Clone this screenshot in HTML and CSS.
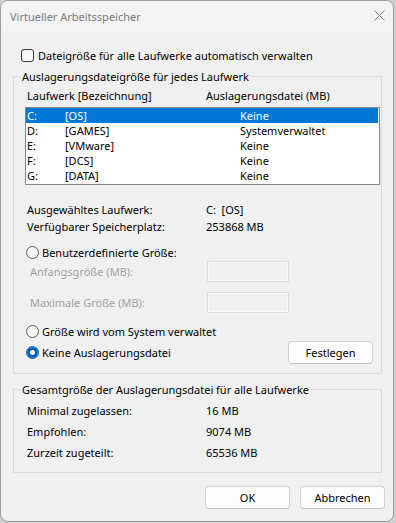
FILE: index.html
```html
<!DOCTYPE html>
<html lang="de">
<head>
<meta charset="utf-8">
<title>Virtueller Arbeitsspeicher</title>
<link rel="stylesheet" href="styles.css">
</head>
<body>
<div class="window">
  <div class="titlebar">
    <span class="title">Virtueller Arbeitsspeicher</span>
    <svg class="close" width="11" height="11" viewBox="0 0 11 11"><path d="M0.5 0.5 L10.5 10.5 M10.5 0.5 L0.5 10.5" stroke="#8a8a8a" stroke-width="1" fill="none"/></svg>
  </div>
  <div class="content">
    <div class="check-row">
      <span class="checkbox"></span>
      <span>Dateigröße für alle Laufwerke automatisch verwalten</span>
    </div>

    <div class="group group-drives">
      <span class="legend">Auslagerungsdateigröße für jedes Laufwerk</span>
      <div class="header-row">
        <span>Laufwerk [Bezeichnung]</span>
        <span>Auslagerungsdatei (MB)</span>
      </div>
      <div class="listbox">
        <div class="lrow selected"><span>C:</span><span>[OS]</span><span>Keine</span></div>
        <div class="lrow"><span>D:</span><span>[GAMES]</span><span>Systemverwaltet</span></div>
        <div class="lrow"><span>E:</span><span>[VMware]</span><span>Keine</span></div>
        <div class="lrow"><span>F:</span><span>[DCS]</span><span>Keine</span></div>
        <div class="lrow"><span>G:</span><span>[DATA]</span><span>Keine</span></div>
      </div>
      <div class="info">
        <span>Ausgewähltes Laufwerk:</span><span class="pre">C:  [OS]</span>
        <span>Verfügbarer Speicherplatz:</span><span>253868 MB</span>
      </div>
      <div class="radio-row first">
        <span class="radio"></span><span>Benutzerdefinierte Größe:</span>
      </div>
      <div class="size-row">
        <span class="disabled">Anfangsgröße (MB):</span><span class="field"></span>
      </div>
      <div class="size-row second">
        <span class="disabled">Maximale Größe (MB):</span><span class="field"></span>
      </div>
      <div class="radio-row system">
        <span class="radio"></span><span>Größe wird vom System verwaltet</span>
      </div>
      <div class="set-row">
        <div class="radio-inline"><span class="radio on"></span><span>Keine Auslagerungsdatei</span></div>
        <button class="btn">Festlegen</button>
      </div>
    </div>

    <div class="group group-total">
      <span class="legend">Gesamtgröße der Auslagerungsdatei für alle Laufwerke</span>
      <div class="totals">
        <span>Minimal zugelassen:</span><span>16 MB</span>
        <span>Empfohlen:</span><span>9074 MB</span>
        <span>Zurzeit zugeteilt:</span><span>65536 MB</span>
      </div>
    </div>

    <div class="buttons">
      <button class="btn">OK</button>
      <button class="btn">Abbrechen</button>
    </div>
  </div>
</div>
</body>
</html>
```

FILE: styles.css
```css
* { box-sizing: border-box; }
html, body { margin: 0; padding: 0; }
body {
  background: #cfcfcf;
  font-family: "Noto Sans", "Open Sans", sans-serif;
  font-size: 11px;
  color: #000;
  line-height: 15px;
}
.window {
  width: 394px;
  height: 522px;
  border: 1px solid #9c9c9c;
  border-radius: 8px;
  background: #f0f0f0;
  overflow: hidden;
}
.titlebar {
  height: 30px;
  background: #f3f3f3;
  display: flex;
  align-items: center;
  justify-content: space-between;
  padding: 0 8px 0 9px;
}
.title { color: #7a7a7a; }
.close { display: block; margin-top: -1px; }
.content { padding: 0 8px 0 12px; }

.check-row {
  margin-top: 17px;
  padding-left: 8px;
  display: flex;
  align-items: center;
  gap: 4px;
  height: 15px;
}
.checkbox {
  width: 13px; height: 13px;
  border: 1px solid #3a3a3a;
  border-radius: 3px;
  background: #f7f7f7;
}

.group {
  position: relative;
  border: 1px solid #dcdcdc;
  width: 369px;
}
.legend {
  position: absolute;
  top: -8px;
  left: 7px;
  padding: 0 1px;
  background: #f0f0f0;
  line-height: 15px;
}
.group-drives { margin-top: 13px; height: 298px; padding: 11px 0 0 0; }

.header-row {
  display: grid;
  grid-template-columns: 179px 1fr;
  padding-left: 13px;
  height: 15px;
}
.listbox {
  margin: 4px 0 0 11px;
  width: 355px;
  height: 78px;
  border: 1px solid #828790;
  background: #fff;
  padding: 0 1px 0 0;
}
.lrow {
  display: grid;
  grid-template-columns: 38px 175px 1fr;
  height: 15px;
  padding-left: 1px;
}
.lrow.selected { background: #0078d7; color: #fff; }

.info {
  margin-top: 17px;
  padding-left: 13px;
  display: grid;
  grid-template-columns: 179px 1fr;
  row-gap: 2px;
}
.pre { white-space: pre; }

.radio-row, .radio-inline {
  display: flex;
  align-items: center;
  gap: 3px;
  height: 15px;
}
.radio-row { padding-left: 12px; }
.radio-row.first { margin-top: 11px; }
.radio-row.system { margin-top: 11px; }
.radio {
  width: 13px; height: 13px;
  border: 1px solid #5a5a5a;
  border-radius: 50%;
  background: #f7f7f7;
  flex: none;
}
.radio.on {
  border-color: #005fb8;
  background: #fff;
  box-shadow: inset 0 0 0 3px #005fb8;
}

.size-row {
  display: grid;
  grid-template-columns: 177px 82px;
  align-items: center;
  height: 21px;
  padding-left: 16px;
  margin-top: 1px;
}
.size-row.second { margin-top: 10px; }
.disabled { color: #a0a0a0; }
.field {
  height: 21px;
  border: 1px solid #dedede;
  box-shadow: inset 0 0 0 1px #f7f7f7;
}

.set-row {
  margin-top: 2px;
  height: 23px;
  display: flex;
  align-items: center;
  justify-content: space-between;
  padding: 0 8px 0 12px;
}

.btn {
  font: inherit;
  color: #000;
  width: 85px;
  height: 23px;
  padding: 0;
  background: #fdfdfd;
  border: 1px solid #d0d0d0;
  border-bottom-color: #c0c0c0;
  border-radius: 4px;
  line-height: 19px;
}

.group-total { margin-top: 15px; height: 84px; padding: 10px 0 0 13px; }
.totals {
  display: grid;
  grid-template-columns: 179px 1fr;
  grid-auto-rows: 21px;
  line-height: 21px;
}

.buttons {
  margin-top: 13px;
  display: flex;
  justify-content: flex-end;
  gap: 10px;
}
```
